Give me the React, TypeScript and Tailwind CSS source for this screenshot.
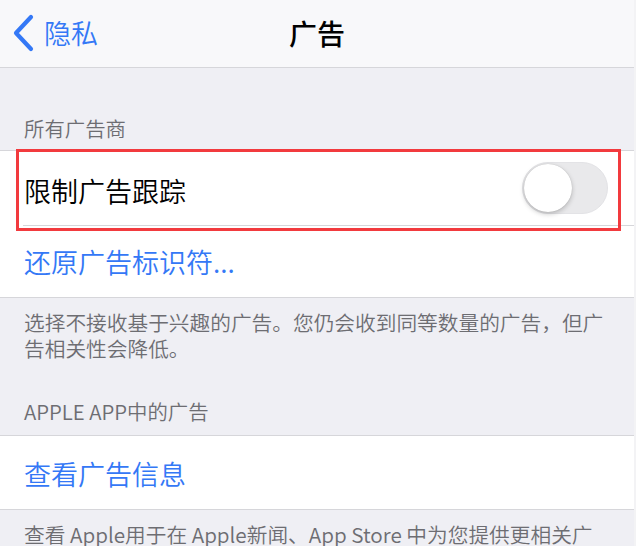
import React from "react";

const font = { fontFamily: '"Noto Sans CJK SC", "Noto Sans", sans-serif' };

function Toggle() {
  return (
    <div className="relative w-[86px] h-[52px] rounded-full bg-[#e9e9eb] border border-[#e3e3e6]">
      <div className="absolute left-[1px] top-[1px] w-[48px] h-[48px] rounded-full bg-white shadow-[0_2px_5px_rgba(0,0,0,0.22),0_0_1px_rgba(0,0,0,0.2)]" />
    </div>
  );
}

export default function App() {
  return (
    <div className="w-[636px] h-[546px] overflow-hidden flex bg-[#efeff4] font-[350]" style={font}>
      <div className="w-[634px] flex flex-col">
        {/* Nav bar */}
        <div className="h-[68px] shrink-0 bg-[#f8f8fa] border-b border-[#d6d6da] relative flex items-center justify-center">
          <div className="absolute left-[12px] top-0 h-[66px] flex items-center">
            <svg width="22" height="38" viewBox="0 0 22 38" className="mr-[10px]">
              <path d="M19 3 L4 19 L19 35" fill="none" stroke="#3478f6" strokeWidth="4.2" strokeLinecap="round" strokeLinejoin="round" />
            </svg>
            <span className="text-[27px] leading-none text-[#3478f6] mt-[-2px]">隐私</span>
          </div>
          <span className="text-[28px] leading-none font-medium text-black mt-[-2px]">广告</span>
        </div>

        {/* Section 1 header */}
        <div className="h-[82px] shrink-0 flex items-end px-[24px] pb-[8px]">
          <span className="text-[20.4px] leading-[28px] text-[#6d6d72]">所有广告商</span>
        </div>

        {/* Group 1 */}
        <div className="relative bg-white border-y border-[#d6d6da] shrink-0">
          <div className="h-[74px] flex items-center justify-between pl-[24px] pr-[26px]">
            <span className="text-[27px] leading-none text-black mt-[4px]">限制广告跟踪</span>
            <Toggle />
          </div>
          <div className="ml-[23px] h-px bg-[#d6d6da]" />
          <div className="h-[71px] flex items-center pl-[24px]">
            <span className="text-[27px] leading-none text-[#3478f6]">还原广告标识符...</span>
          </div>
          <div className="absolute left-[16px] top-[-2px] w-[605px] h-[82px] border-[3px] border-[#f23a3e]" />
        </div>

        {/* Footer 1 */}
        <div className="pl-[24px] pr-[24px] pt-[11px] shrink-0">
          <p className="text-[20.7px] leading-[26px] text-[#6d6d72]">
            选择不接收基于兴趣的广告。您仍会收到同等数量的广告，但广告相关性会降低。
          </p>
        </div>

        {/* Section 2 header */}
        <div className="h-[74px] shrink-0 flex items-end px-[24px] pb-[10px]">
          <span className="text-[20.4px] leading-[28px] text-[#6d6d72]">APPLE APP中的广告</span>
        </div>

        {/* Group 2 */}
        <div className="bg-white border-y border-[#d6d6da] shrink-0">
          <div className="h-[73px] flex items-center pl-[24px]">
            <span className="text-[27px] leading-none text-[#3478f6] mt-[2px]">查看广告信息</span>
          </div>
        </div>

        {/* Footer 2 */}
        <div className="pl-[24px] pr-[24px] pt-[11px] shrink-0">
          <p className="text-[20.7px] leading-[26px] text-[#6d6d72]">
            查看 Apple用于在 Apple新闻、App Store 中为您提供更相关广告的信息。
          </p>
        </div>
      </div>
      <div className="flex-1 bg-[#f3f3f5]" />
    </div>
  );
}
